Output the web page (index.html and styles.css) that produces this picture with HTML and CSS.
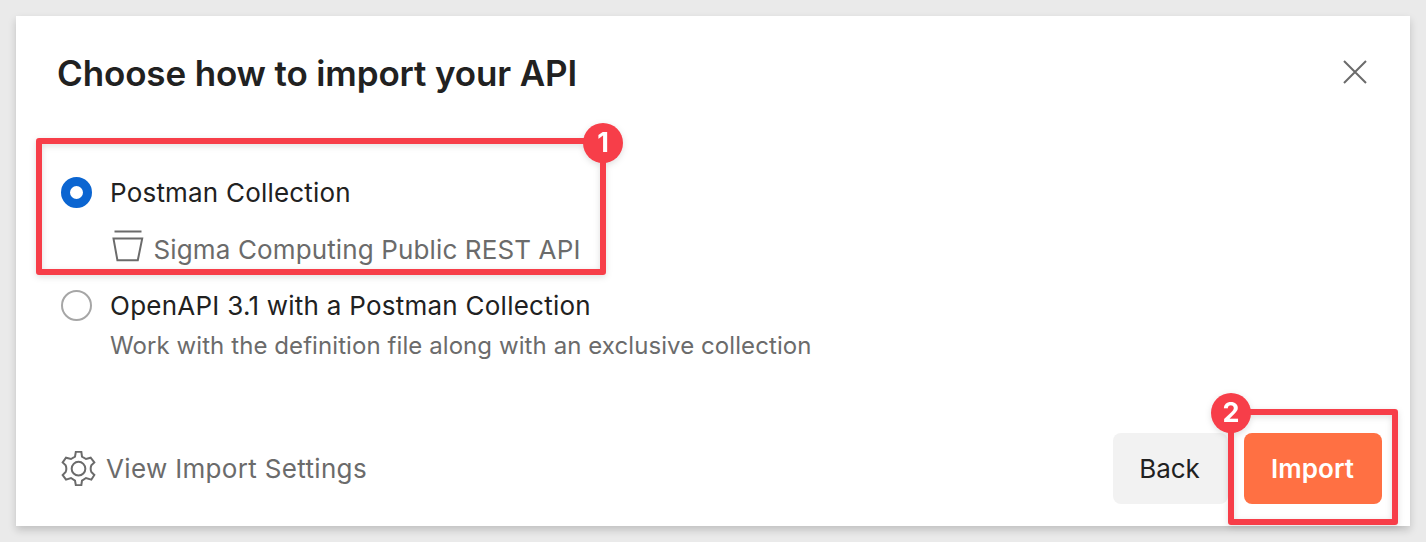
FILE: index.html
```html
<!DOCTYPE html>
<html lang="en">
<head>
<meta charset="utf-8">
<title>Import API</title>
<link rel="stylesheet" href="styles.css">
</head>
<body>
<main class="dialog">
  <header class="dialog-header">
    <h1 class="title">Choose how to import your API</h1>
    <button class="close" aria-label="Close">
      <svg viewBox="0 0 26 26" width="26" height="26"><path d="M2 2L24 24M24 2L2 24"/></svg>
    </button>
  </header>

  <section class="options">
    <label class="option">
      <span class="radio radio-checked"></span>
      <span class="option-label label-first">Postman Collection</span>
    </label>
    <div class="collection">
      <svg class="collection-icon" viewBox="0 0 32 32" width="32" height="32"><path d="M2.5 1.4H29.5M1.5 8.6H30.2L25.8 30.2H5.4Z"/></svg>
      <span class="collection-name">Sigma Computing Public REST API</span>
    </div>
    <label class="option option-second">
      <span class="radio"></span>
      <span class="option-label label-second">OpenAPI 3.1 with a Postman Collection</span>
    </label>
    <p class="hint">Work with the definition file along with an exclusive collection</p>
  </section>

  <footer class="dialog-footer">
    <a class="settings">
      <svg class="gear" viewBox="33 33 105 105" width="35" height="35"><path d="M77.500 35.500H94L96 50L108 57L122 53L133 67L124 76Q120 86 124 96L133 105L124 119L108 114L96 122L94 135.500H77.500L75 122L63 114L48 119L38 105L47 96Q51 86 47 76L38 67L48 53L63 57L75 50Z"/><circle cx="85.500" cy="86" r="20.500"/></svg>
      <span class="settings-label">View Import Settings</span>
    </a>
    <div class="actions">
      <button class="button back">Back</button>
      <button class="button import">Import</button>
    </div>
  </footer>

  <div class="callout callout-one"><span class="badge">1</span></div>
  <div class="callout callout-two"><span class="badge">2</span></div>
</main>
</body>
</html>
```
FILE: styles.css
```css
* { box-sizing: border-box; }
body {
  margin: 0;
  height: 542px;
  padding: 16px;
  overflow: hidden;
  background: #eaeaea;
  color: #212121;
  font-family: Inter, "Liberation Sans", sans-serif;
}
.dialog {
  position: relative;
  display: flex;
  flex-direction: column;
  height: 510px;
  background: #fff;
  box-shadow: 0 4px 8px rgba(0, 0, 0, 0.18);
}
.dialog-header {
  display: flex;
  justify-content: space-between;
  align-items: flex-start;
  padding: 35px 42px 0 41px;
}
.title {
  margin: 0;
  font-size: 35px;
  line-height: 44px;
  font-weight: 600;
  letter-spacing: -0.13px;
  white-space: nowrap;
}
button {
  border: 0;
  padding: 0;
  background: none;
  color: inherit;
  font-family: inherit;
}
.close { display: flex; margin-top: 8px; }
.close svg, .collection-icon, .gear {
  fill: none;
  stroke: #6b6b6b;
  stroke-width: 2;
}
.options {
  display: flex;
  flex-direction: column;
  padding: 82px 45px 0;
}
.option {
  display: flex;
  align-items: flex-start;
  gap: 18px;
  height: 32px;
}
.radio {
  width: 31px;
  height: 31px;
  border: 2px solid #a6a6a6;
  border-radius: 50%;
}
.radio-checked { border: 9.500px solid #0b65d1; }
.option-label, .collection-name {
  font-size: 26px;
  line-height: 32px;
  white-space: nowrap;
}
.label-first { letter-spacing: 0.2px; }
.label-second { letter-spacing: 0.25px; }
.collection {
  display: flex;
  gap: 10px;
  margin: 21px 0 0 50.500px;
  color: #6b6b6b;
}
.collection-name {
  margin-top: 4px;
  letter-spacing: 0.13px;
}
.option-second { margin-top: 24px; }
.hint {
  margin: 9px 0 0 49px;
  color: #6b6b6b;
  font-size: 24px;
  line-height: 30px;
  letter-spacing: 0.08px;
  white-space: nowrap;
}
.dialog-footer {
  display: flex;
  justify-content: space-between;
  align-items: center;
  margin-top: auto;
  padding: 0 28px 22px 45px;
}
.settings {
  display: flex;
  align-items: center;
  gap: 10px;
  color: #6b6b6b;
  font-size: 26px;
  line-height: 32px;
  letter-spacing: 0.33px;
  white-space: nowrap;
}
.gear { stroke-width: 6; }
.actions { display: flex; gap: 16px; }
.button {
  height: 71px;
  border-radius: 8px;
  font-size: 26px;
  line-height: 32px;
}
.back {
  width: 115px;
  padding-right: 2px;
  background: #f2f2f2;
}
.import {
  width: 138px;
  padding-right: 1px;
  background: #ff7043;
  color: #fff;
  font-weight: 600;
  letter-spacing: 0.1px;
}
.callout {
  position: absolute;
  border: 6px solid #f73e49;
  border-radius: 3px;
  filter: drop-shadow(0 2px 3px rgba(0, 0, 0, 0.13));
}
.callout-one { left: 20px; top: 121.500px; width: 570px; height: 137.500px; }
.callout-two { left: 1211.500px; top: 393px; width: 170.500px; height: 116px; }
.badge {
  position: absolute;
  display: flex;
  align-items: center;
  justify-content: center;
  width: 40px;
  height: 40px;
  border-radius: 50%;
  background: #f73e49;
  color: #fff;
  font-size: 27px;
  font-weight: 700;
  line-height: 40px;
}
.callout-one .badge { right: -23px; top: -21px; }
.callout-two .badge { left: -22.500px; top: -22.500px; }
```
